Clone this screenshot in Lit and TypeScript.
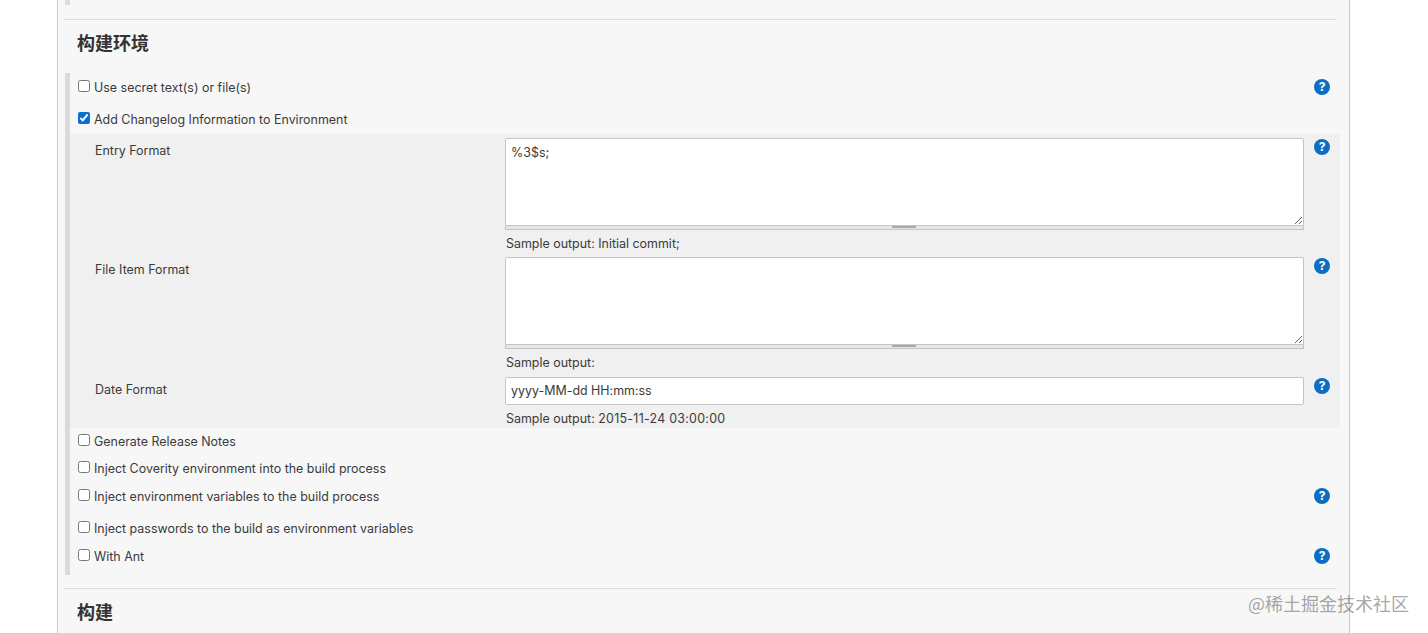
import { LitElement, html, css } from "lit";
import { customElement } from "lit/decorators.js";

const help = html`<span class="help">?</span>`;

@customElement("app-root")
export class AppRoot extends LitElement {
  static styles = css`
    :host {
      display: block;
      height: 633px;
      overflow: hidden;
      position: relative;
      background: #fff;
      font-family: "Inter", "Noto Sans CJK SC", sans-serif;
      font-size: 12.45px;
      color: #3a3a3a;
    }
    .panel {
      box-sizing: border-box;
      margin-left: 57px;
      width: 1293px;
      height: 633px;
      overflow: hidden;
      background: #f7f7f7;
      border-left: 1px solid #c9c9c9;
      border-right: 1px solid #c9c9c9;
      padding: 0 9px 0 6px;
    }
    .stub {
      width: 5px;
      height: 5px;
      margin-left: 1px;
      background: #dcdcdc;
    }
    hr {
      margin: 14px 4px 0 0;
      border: 0;
      height: 1px;
      background: #dedede;
    }
    hr.lower { margin-top: 13px; }
    h2 {
      margin: 0;
      padding-left: 13px;
      font-size: 18px;
      font-weight: 700;
      color: #333;
      font-family: "Noto Sans CJK SC", sans-serif;
    }
    .t1 { height: 53px; line-height: 45px; }
    .t2 { height: 44px; line-height: 44px; }
    .form {
      margin-left: 1px;
      border-left: 5px solid #dadada;
      padding-bottom: 7px;
    }
    .row {
      display: flex;
      align-items: center;
      box-sizing: border-box;
      height: 24px;
      padding: 0 10px 0 8px;
      margin-top: 4px;
    }
    .row.first { margin-top: 0; height: 28px; }
    .row.second { height: 28px; }
    .row.tall { margin-top: 8px; }
    .row.after { margin-top: 0; padding-top: 2px; }
    .row span.text { flex: 1; margin-left: 4px; padding-top: 1px; }
    input[type="checkbox"] {
      width: 12px;
      height: 12px;
      margin: -2px 0 0 0;
      accent-color: #0b6fd1;
    }
    .help {
      flex: none;
      display: block;
      width: 16px;
      height: 16px;
      border-radius: 50%;
      background: #0b6ec4;
      color: #fff;
      font-size: 12px;
      font-weight: 700;
      line-height: 16px;
      text-align: center;
    }
    .block {
      margin-top: 1px;
      background: #f0f0f0;
      padding-top: 4px;
      display: grid;
      grid-template-columns: 435px 799px 1fr;
      height: 294px;
      box-sizing: border-box;
    }
    .label {
      padding: 5px 0 0 25px;
      line-height: 16px;
    }
    .hcell {
      display: flex;
      justify-content: flex-end;
      padding: 1px 10px 0 0;
    }
    .sample {
      height: 27px;
      line-height: 28px;
      padding-left: 1px;
    }
    .sample.last { height: 23px; line-height: 27px; }
    .digits { letter-spacing: 0.26px; }
    textarea {
      display: block;
      box-sizing: border-box;
      width: 799px;
      height: 88px;
      margin: 0;
      padding: 6px 5px;
      border: 1px solid #c4c4c4;
      border-radius: 2px 2px 0 0;
      background: #fff;
      color: #3a3a3a;
      font: inherit;
      resize: vertical;
      outline: none;
    }
    .grip {
      box-sizing: border-box;
      height: 4px;
      background: #e6e6e6;
      border: 1px solid #c4c4c4;
      border-top: 0;
      display: flex;
      justify-content: center;
      padding-right: 2px;
    }
    .grip i {
      display: block;
      width: 24px;
      height: 2px;
      background: #a8a8a8;
    }
    .textinput {
      display: block;
      box-sizing: border-box;
      width: 799px;
      height: 28px;
      margin: 1px 0 0;
      padding: 0 5px 2px;
      border: 1px solid #c4c4c4;
      border-radius: 2px;
      background: #fff;
      color: #3a3a3a;
      font: inherit;
      outline: none;
    }
    .datecell { padding-top: 6px; }
    .datehelp { padding-top: 2px; }
    .mark {
      position: absolute;
      left: 1248px;
      top: 590px;
      font-family: "Noto Sans CJK SC", sans-serif;
      font-size: 18px;
      line-height: 26px;
      color: rgba(110, 110, 110, 0.62);
      white-space: nowrap;
    }
  `;

  private check(text: string, hasHelp: boolean, cls = "", checked = false) {
    return html`<div class="row ${cls}">
      <input type="checkbox" .checked=${checked} />
      <span class="text">${text}</span>
      ${hasHelp ? help : ""}
    </div>`;
  }

  render() {
    return html`
      <div class="panel">
        <div class="stub"></div>
        <hr />
        <h2 class="t1">构建环境</h2>
        <div class="form">
          ${this.check("Use secret text(s) or file(s)", true, "first")}
          ${this.check("Add Changelog Information to Environment", false, "second", true)}
          <div class="block">
            <div class="label">Entry Format</div>
            <div>
              <textarea readonly .value=${"%3$s;"}></textarea>
              <div class="grip"><i></i></div>
              <div class="sample">Sample output: Initial commit;</div>
            </div>
            <div class="hcell">${help}</div>
            <div class="label">File Item Format</div>
            <div>
              <textarea readonly></textarea>
              <div class="grip"><i></i></div>
              <div class="sample">Sample output:</div>
            </div>
            <div class="hcell">${help}</div>
            <div class="label datecell">Date Format</div>
            <div>
              <input class="textinput" readonly .value=${"yyyy-MM-dd HH:mm:ss"} />
              <div class="sample last">Sample output: <span class="digits">2015-11-24 03:00:00</span></div>
            </div>
            <div class="hcell datehelp">${help}</div>
          </div>
          ${this.check("Generate Release Notes", false, "after")}
          ${this.check("Inject Coverity environment into the build process", false)}
          ${this.check("Inject environment variables to the build process", true)}
          ${this.check("Inject passwords to the build as environment variables", false, "tall")}
          ${this.check("With Ant", true)}
        </div>
        <hr class="lower" />
        <h2 class="t2">构建</h2>
      </div>
      <div class="mark">@稀土掘金技术社区</div>
    `;
  }
}
